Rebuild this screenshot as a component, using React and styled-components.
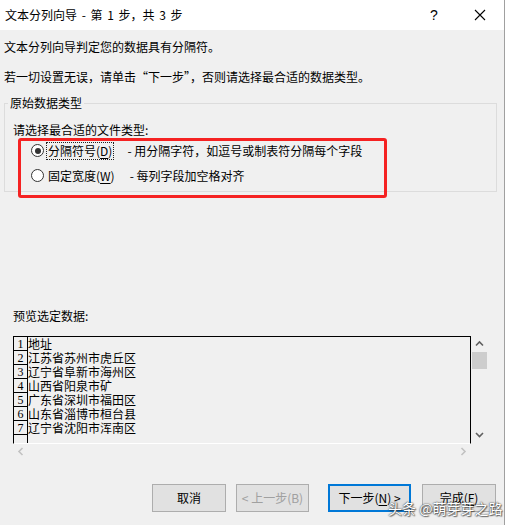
import React from "react";
import styled, { createGlobalStyle } from "styled-components";

const GlobalStyle = createGlobalStyle`
  html, body {
    margin: 0;
    padding: 0;
    background: #f0f0f0;
  }
  body {
    font-family: "Noto Sans CJK SC", "Noto Sans", sans-serif;
    font-size: 12px;
    color: #000;
  }
`;

const rows = [
  "地址",
  "江苏省苏州市虎丘区",
  "辽宁省阜新市海州区",
  "山西省阳泉市矿",
  "广东省深圳市福田区",
  "山东省淄博市桓台县",
  "辽宁省沈阳市浑南区",
];

function Chevron({ dir, color }) {
  const d = {
    up: "M1 5.5 L4.5 2 L8 5.5",
    down: "M1 2 L4.5 5.5 L8 2",
    left: "M5.5 1 L2 4.5 L5.5 8",
    right: "M2.5 1 L6 4.5 L2.5 8",
  }[dir];
  return (
    <svg width="9" height="9" viewBox="0 0 9 9">
      <path d={d} fill="none" stroke={color} strokeWidth="1.6" />
    </svg>
  );
}

function App() {
  return (
    <>
      <GlobalStyle />
      <Dialog>
        <TitleBar>
          <Title>文本分列向导 - 第 1 步，共 3 步</Title>
          <TitleButton $w={44}>?</TitleButton>
          <TitleButton $w={48}>
            <svg width="12" height="12" viewBox="0 0 12 12">
              <path d="M1 1 L11 11 M11 1 L1 11" stroke="#000" strokeWidth="1.1" />
            </svg>
          </TitleButton>
        </TitleBar>

        <Body>
          <Message $top={9}>文本分列向导判定您的数据具有分隔符。</Message>
          <Message $top={14}>若一切设置无误，请单击“下一步”，否则请选择最合适的数据类型。</Message>

          <Group>
            <Legend>原始数据类型</Legend>
            <GroupInner>
              <Prompt>请选择最合适的文件类型:</Prompt>
              <RadioRow>
                <Radio $checked />
                <RadioLabel $focused>
                  分隔符号(<u>D</u>)
                </RadioLabel>
                <Hint>- 用分隔字符，如逗号或制表符分隔每个字段</Hint>
              </RadioRow>
              <RadioRow>
                <Radio />
                <RadioLabel>
                  固定宽度(<u>W</u>)
                </RadioLabel>
                <Hint>- 每列字段加空格对齐</Hint>
              </RadioRow>
            </GroupInner>
          </Group>

          <PreviewTitle>预览选定数据:</PreviewTitle>
          <PreviewRow>
            <PreviewBox>
              {rows.map((text, i) => (
                <DataRow key={i}>
                  <NumCell>{i + 1}</NumCell>
                  <DataText>{text}</DataText>
                </DataRow>
              ))}
              <DataRow $fill>
                <NumCell $fill />
              </DataRow>
            </PreviewBox>
            <VScroll>
              <ArrowCell $h={16}>
                <Chevron dir="up" color="#606060" />
              </ArrowCell>
              <Thumb />
              <Spacer />
              <ArrowCell $h={17}>
                <Chevron dir="down" color="#606060" />
              </ArrowCell>
            </VScroll>
          </PreviewRow>
          <HScroll>
            <ArrowCell $w={16}>
              <Chevron dir="left" color="#c2c2c2" />
            </ArrowCell>
            <ArrowCell $w={16}>
              <Chevron dir="right" color="#c2c2c2" />
            </ArrowCell>
          </HScroll>

          <ButtonBar>
            <Button $w={74} $ml={148}>取消</Button>
            <Button $w={73} $ml={10} $disabled>&lt; 上一步(B)</Button>
            <Button $w={83} $ml={19} $focused>
              下一步(<u>N</u>) &gt;
            </Button>
            <Button $w={74} $ml={11}>
              完成(<u>F</u>)
            </Button>
          </ButtonBar>
        </Body>

        <Annotation />
        <Watermark>头条 @萌芽芽之路</Watermark>
      </Dialog>
    </>
  );
}

export default App;

const Dialog = styled.div`
  position: relative;
  width: 504px;
  height: 525px;
  background: #f0f0f0;
  border-right: 1px solid #a0a0a0;
  display: flex;
  flex-direction: column;
  overflow: hidden;
`;

const TitleBar = styled.div`
  height: 30px;
  background: #fff;
  display: flex;
  align-items: center;
  padding-left: 5px;
  flex-shrink: 0;
`;

const Title = styled.div`
  flex: 1;
  font-size: 12px;
  line-height: 16px;
  word-spacing: 2px;
`;

const TitleButton = styled.div`
  width: ${(p) => p.$w}px;
  height: 30px;
  display: flex;
  align-items: center;
  justify-content: center;
  font-family: "Liberation Sans", sans-serif;
  font-size: 14px;
`;

const Body = styled.div`
  display: flex;
  flex-direction: column;
  padding: 0 4px;
`;

const Message = styled.div`
  margin-top: ${(p) => p.$top}px;
  line-height: 16px;
  white-space: nowrap;
`;

const Group = styled.fieldset`
  margin: 10px 0 0 0;
  padding: 0 0 3px 0;
  width: 493px;
  box-sizing: border-box;
  border: 1px solid #dcdcdc;
  min-width: 0;
`;

const Legend = styled.legend`
  margin-left: 3px;
  padding: 0 2px;
  line-height: 16px;
`;

const GroupInner = styled.div`
  display: flex;
  flex-direction: column;
  padding-left: 8px;
`;

const Prompt = styled.div`
  margin-top: 11px;
  line-height: 16px;
`;

const RadioRow = styled.div`
  height: 25px;
  display: flex;
  align-items: center;
  padding-left: 18px;
  &:first-of-type {
    margin-top: 2px;
  }
`;

const Radio = styled.span`
  position: relative;
  width: 13px;
  height: 13px;
  box-sizing: border-box;
  border: 1px solid #333;
  border-radius: 50%;
  background: #fff;
  flex-shrink: 0;
  &::after {
    content: "";
    display: ${(p) => (p.$checked ? "block" : "none")};
    position: absolute;
    left: 2.5px;
    top: 2.5px;
    width: 6px;
    height: 6px;
    border-radius: 50%;
    background: #333;
  }
`;

const RadioLabel = styled.span`
  margin-left: 2px;
  padding: 0 1px;
  height: 18px;
  line-height: 16px;
  box-sizing: border-box;
  border: 1px dotted ${(p) => (p.$focused ? "#222" : "transparent")};
  white-space: nowrap;
  u {
    text-underline-offset: 2px;
  }
`;

const Hint = styled.span`
  margin-left: 13px;
  line-height: 16px;
  white-space: nowrap;
`;

const PreviewTitle = styled.div`
  margin: 116px 0 0 9px;
  line-height: 16px;
`;

const PreviewRow = styled.div`
  display: flex;
  margin: 12px 0 0 9px;
  height: 108px;
`;

const PreviewBox = styled.div`
  width: 458px;
  box-sizing: border-box;
  border-top: 1px solid #000;
  border-left: 1px solid #000;
  border-right: 1px solid #000;
  border-bottom: 1px solid #fff;
  display: flex;
  flex-direction: column;
  overflow: hidden;
`;

const DataRow = styled.div`
  display: flex;
  height: ${(p) => (p.$fill ? "auto" : "14px")};
  flex: ${(p) => (p.$fill ? 1 : "none")};
`;

const NumCell = styled.div`
  width: 13px;
  box-sizing: content-box;
  border-right: 1px solid #000;
  border-bottom: ${(p) => (p.$fill ? "none" : "1px solid #000")};
  height: ${(p) => (p.$fill ? "auto" : "13px")};
  font-family: "Liberation Serif", serif;
  font-size: 12px;
  line-height: 14px;
  text-align: center;
`;

const DataText = styled.div`
  padding-left: 0;
  font-size: 12px;
  line-height: 14px;
  white-space: nowrap;
`;

const VScroll = styled.div`
  width: 17px;
  display: flex;
  flex-direction: column;
  align-items: center;
`;

const ArrowCell = styled.div`
  width: ${(p) => (p.$w ? `${p.$w}px` : "100%")};
  height: ${(p) => (p.$h ? `${p.$h}px` : "100%")};
  display: flex;
  align-items: center;
  justify-content: center;
  flex-shrink: 0;
`;

const Thumb = styled.div`
  width: 15px;
  height: 17px;
  background: #cdcdcd;
`;

const Spacer = styled.div`
  flex: 1;
`;

const HScroll = styled.div`
  width: 458px;
  height: 14px;
  margin-left: 9px;
  display: flex;
  justify-content: space-between;
`;

const ButtonBar = styled.div`
  display: flex;
  margin-top: 26px;
`;

const Button = styled.div`
  width: ${(p) => p.$w}px;
  height: 28px;
  margin-left: ${(p) => p.$ml}px;
  box-sizing: border-box;
  background: #e1e1e1;
  border: ${(p) => (p.$focused ? "2px solid #0078d7" : "1px solid #adadad")};
  color: ${(p) => (p.$disabled ? "#a0a0a0" : "#000")};
  display: flex;
  align-items: center;
  justify-content: center;
  font-size: 12px;
  line-height: 16px;
  white-space: nowrap;
  u {
    text-underline-offset: 2px;
  }
`;

const Annotation = styled.div`
  position: absolute;
  left: 18px;
  top: 138px;
  width: 369px;
  height: 60px;
  box-sizing: border-box;
  border: 3px solid #f52222;
  border-radius: 3px;
`;

const Watermark = styled.div`
  position: absolute;
  left: 388px;
  top: 499px;
  font-size: 14px;
  line-height: 18px;
  color: #fff;
  white-space: nowrap;
  text-shadow: 0 0 1px #444, 0 0 2px #555, 1px 1px 1px rgba(0, 0, 0, 0.5);
`;
